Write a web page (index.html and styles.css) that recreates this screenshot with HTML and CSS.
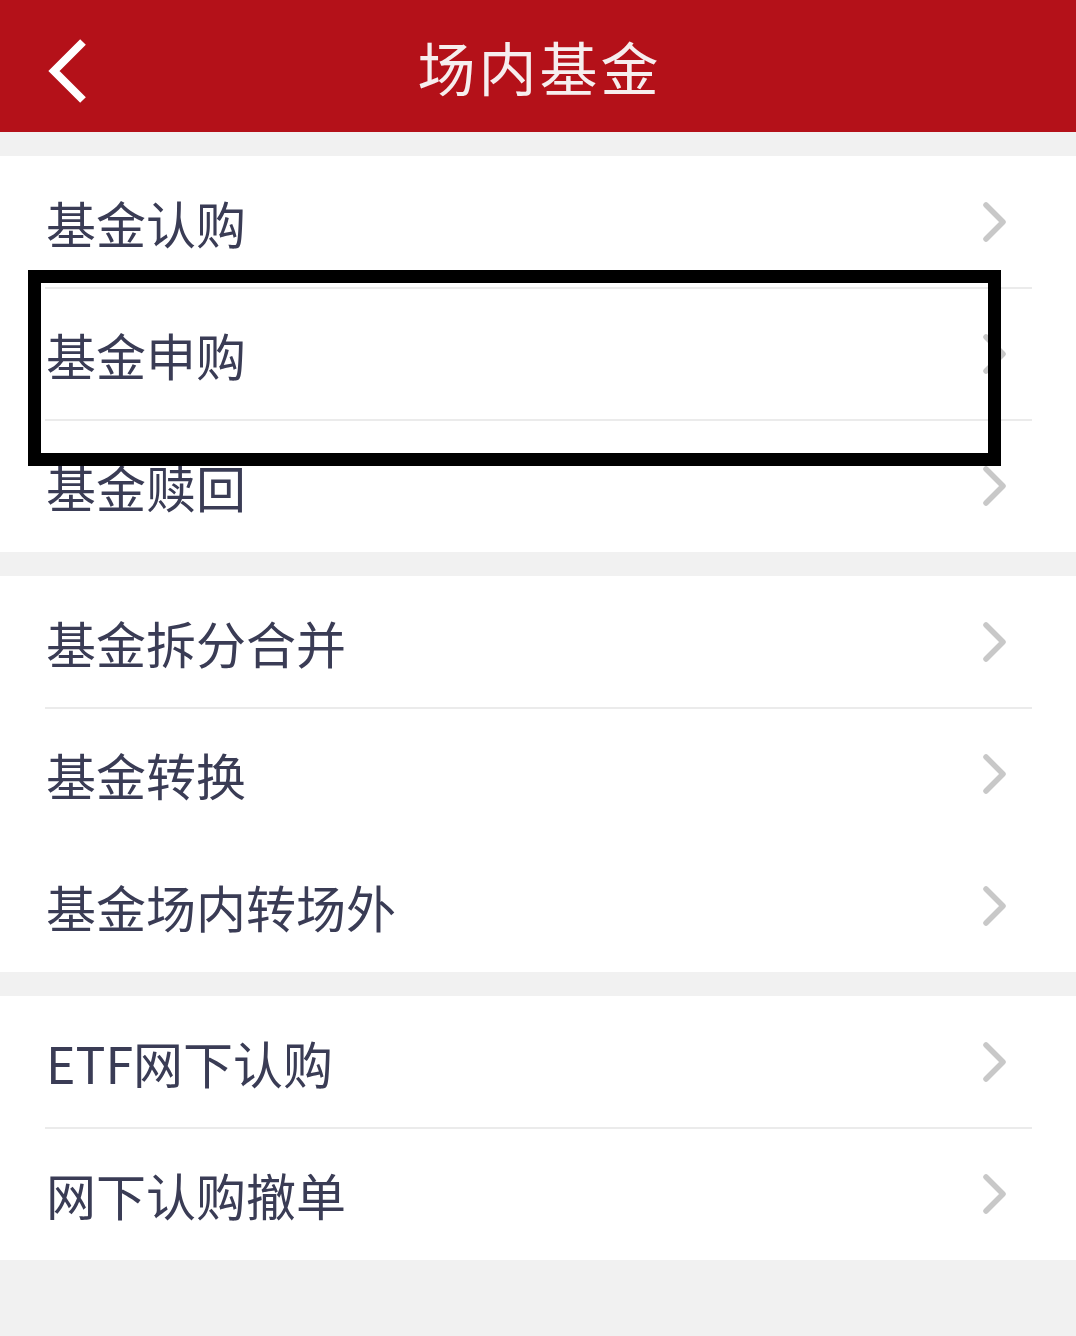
FILE: index.html
```html
<!DOCTYPE html>
<html lang="zh-CN">
<head>
<meta charset="utf-8">
<title>场内基金</title>
<link rel="stylesheet" href="styles.css">
</head>
<body>
<div class="page">
  <header class="topbar">
    <span class="back">
      <svg width="60" height="80" viewBox="0 0 60 80"><path d="M42 6 L13 35 L42 64" fill="none" stroke="#fff" stroke-width="8" stroke-linecap="butt" stroke-linejoin="miter"/></svg>
    </span>
    <h1 class="title">场内基金</h1>
  </header>

  <section class="group">
    <div class="row"><span class="label">基金认购</span><span class="chev"><svg width="26" height="40" viewBox="0 0 26 40"><path d="M4 3 L21 20 L4 37" fill="none" stroke="#c8c8c8" stroke-width="5.5" stroke-linecap="round" stroke-linejoin="round"/></svg></span></div>
    <div class="row"><span class="label">基金申购</span><span class="chev"><svg width="26" height="40" viewBox="0 0 26 40"><path d="M4 3 L21 20 L4 37" fill="none" stroke="#c8c8c8" stroke-width="5.5" stroke-linecap="round" stroke-linejoin="round"/></svg></span></div>
    <div class="row"><span class="label">基金赎回</span><span class="chev"><svg width="26" height="40" viewBox="0 0 26 40"><path d="M4 3 L21 20 L4 37" fill="none" stroke="#c8c8c8" stroke-width="5.5" stroke-linecap="round" stroke-linejoin="round"/></svg></span></div>
  </section>

  <section class="group">
    <div class="row"><span class="label">基金拆分合并</span><span class="chev"><svg width="26" height="40" viewBox="0 0 26 40"><path d="M4 3 L21 20 L4 37" fill="none" stroke="#c8c8c8" stroke-width="5.5" stroke-linecap="round" stroke-linejoin="round"/></svg></span></div>
    <div class="row no-line"><span class="label">基金转换</span><span class="chev"><svg width="26" height="40" viewBox="0 0 26 40"><path d="M4 3 L21 20 L4 37" fill="none" stroke="#c8c8c8" stroke-width="5.5" stroke-linecap="round" stroke-linejoin="round"/></svg></span></div>
    <div class="row"><span class="label">基金场内转场外</span><span class="chev"><svg width="26" height="40" viewBox="0 0 26 40"><path d="M4 3 L21 20 L4 37" fill="none" stroke="#c8c8c8" stroke-width="5.5" stroke-linecap="round" stroke-linejoin="round"/></svg></span></div>
  </section>

  <section class="group">
    <div class="row"><span class="label">ETF网下认购</span><span class="chev"><svg width="26" height="40" viewBox="0 0 26 40"><path d="M4 3 L21 20 L4 37" fill="none" stroke="#c8c8c8" stroke-width="5.5" stroke-linecap="round" stroke-linejoin="round"/></svg></span></div>
    <div class="row"><span class="label">网下认购撤单</span><span class="chev"><svg width="26" height="40" viewBox="0 0 26 40"><path d="M4 3 L21 20 L4 37" fill="none" stroke="#c8c8c8" stroke-width="5.5" stroke-linecap="round" stroke-linejoin="round"/></svg></span></div>
  </section>

  <div class="highlight"></div>
</div>
</body>
</html>
```

FILE: styles.css
```css
html, body {
  margin: 0;
  padding: 0;
  background: #f1f1f1;
}
.page {
  position: relative;
  width: 1076px;
  min-height: 1336px;
  font-family: "Noto Sans CJK SC", "Noto Sans", sans-serif;
  display: flex;
  flex-direction: column;
  gap: 24px;
}
.topbar {
  height: 132px;
  background: #b41119;
  position: relative;
  display: flex;
  align-items: center;
  justify-content: center;
}
.back {
  position: absolute;
  left: 41px;
  top: 36px;
  width: 60px;
  height: 80px;
}
.title {
  margin: 0;
  color: #f6eeee;
  font-size: 58px;
  font-weight: 400;
  letter-spacing: 3px;
  line-height: 1;
  padding-left: 3px;
}
.group {
  background: #fff;
  display: flex;
  flex-direction: column;
}
.row {
  height: 132px;
  display: flex;
  align-items: center;
  justify-content: space-between;
  padding: 0 68px 0 46px;
  position: relative;
}
.row + .row::before {
  content: "";
  position: absolute;
  left: 45px;
  right: 44px;
  top: -1px;
  height: 2px;
  background: #ebebeb;
}
.row.no-line + .row::before {
  display: none;
}
.label {
  font-size: 50px;
  color: #3a3c55;
  line-height: 1;
}
.chev {
  width: 26px;
  height: 40px;
  display: flex;
}
.highlight {
  position: absolute;
  left: 28px;
  top: 270px;
  width: 947px;
  height: 170px;
  border: 13px solid #000;
}
```
